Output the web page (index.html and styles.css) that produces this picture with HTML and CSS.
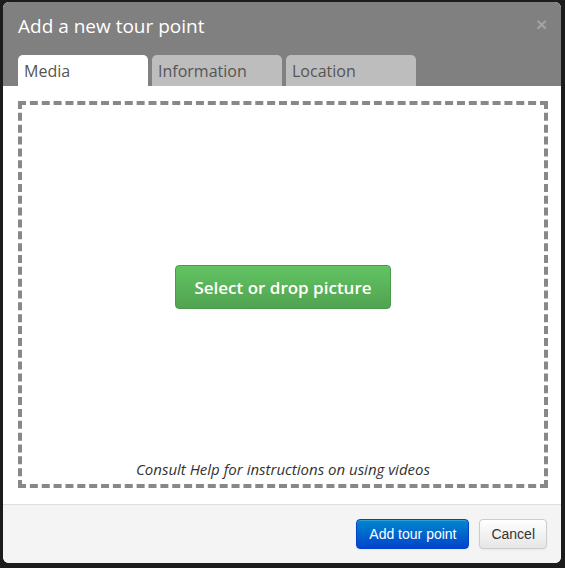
FILE: index.html
```html
<!DOCTYPE html>
<html lang="en">
<head>
    <meta charset="UTF-8">
    <title>Add a new tour point</title>
    <link rel="stylesheet" href="styles.css">
</head>
<body>
<div class="modal">
    <!--标题栏-->
    <div class="modal-header">
        <span class="close">&times;</span>
        <h3>Add a new tour point</h3>
        <ul class="tabs">
            <li class="current">Media</li>
            <li>Information</li>
            <li>Location</li>
        </ul>
    </div>
    <!--内容-->
    <div class="modal-body">
        <div class="drop">
            <button class="btn-success">Select or drop picture</button>
            <p class="hint">Consult Help for instructions on using videos</p>
        </div>
    </div>
    <!--底部按钮-->
    <div class="modal-footer">
        <button class="btn btn-primary">Add tour point</button>
        <button class="btn">Cancel</button>
    </div>
</div>
</body>
</html>
```

FILE: styles.css
```css
* {
    margin: 0;
    padding: 0
}

ul {
    list-style: none
}

body {
    background-color: #1c1c1c;
    font-family: "Open Sans", sans-serif;
    padding: 2px 0 0 3px;
    height: 568px;
    box-sizing: border-box;
    overflow: hidden;
}

.modal {
    width: 558px;
    height: 561px;
    background-color: #fff;
    border-radius: 6px;
    overflow: hidden;
    display: flex;
    flex-direction: column;
}

.modal-header {
    background-color: #808080;
    padding: 0 15px;
    position: relative;
}

.modal-header h3 {
    font-size: 19px;
    font-weight: normal;
    color: #fff;
    line-height: 26px;
    padding-top: 11px;
    height: 42px;
}

.close {
    position: absolute;
    right: 14px;
    top: 10px;
    font-size: 19px;
    font-weight: bold;
    color: #a3a3a3;
    line-height: 26px;
    font-family: "Liberation Sans", sans-serif;
}

.tabs {
    display: flex;
    gap: 4px;
}

.tabs li {
    width: 130px;
    height: 31px;
    box-sizing: border-box;
    padding: 4px 0 0 6px;
    background-color: #bdbdbd;
    border-radius: 5px 5px 0 0;
    color: #555;
    font-size: 16px;
    line-height: 24px;
}

.tabs li.current {
    background-color: #fff;
}

.modal-body {
    flex: 1;
    padding: 15px 13px 16px 15px;
    border-bottom: 1px solid #dedede;
}

.drop {
    height: 387px;
    box-sizing: border-box;
    border: 4px dashed #888;
    display: flex;
    flex-direction: column;
    align-items: center;
}

.btn-success {
    margin-top: 160px;
    width: 216px;
    height: 44px;
    border: 1px solid #4a9a4a;
    border-radius: 4px;
    background-image: linear-gradient(#62c462, #51a351);
    color: #fff;
    font-family: "Open Sans", sans-serif;
    font-size: 17px;
    font-weight: 600;
}

.hint {
    margin-top: auto;
    margin-bottom: 5px;
    font-size: 15px;
    font-style: italic;
    color: #333;
    line-height: 20px;
}

.modal-footer {
    background-color: #f4f4f4;
    flex: 0 0 58px;
    display: flex;
    justify-content: flex-end;
    align-items: flex-start;
    gap: 10px;
    padding: 14px 14px 0 0;
    box-sizing: border-box;
}

.btn {
    height: 30px;
    padding: 0 11px;
    border: 1px solid #ccc;
    border-radius: 4px;
    background-image: linear-gradient(#fff, #e6e6e6);
    color: #333;
    font-family: "Liberation Sans", sans-serif;
    font-size: 14px;
    box-shadow: inset 0 1px 0 rgba(255, 255, 255, .2), 0 1px 2px rgba(0, 0, 0, .05);
}

.btn-primary {
    width: 113px;
    padding: 0;
    border-color: #0044cc;
    background-image: linear-gradient(#0088cc, #0044cc);
    color: #fff;
}
```
